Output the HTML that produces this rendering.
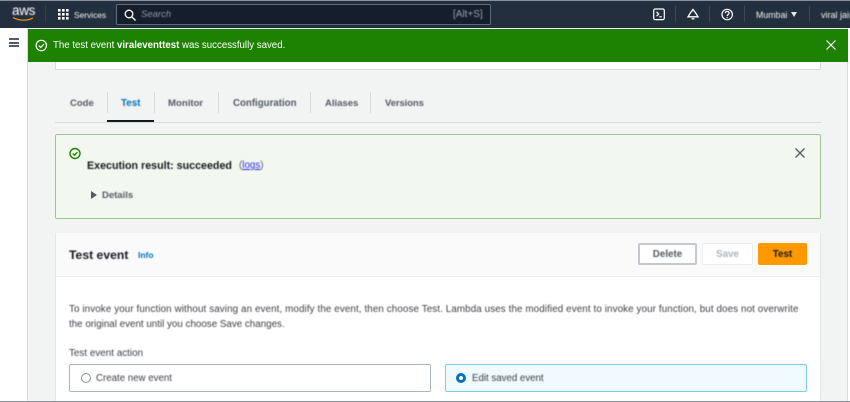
<!DOCTYPE html>
<html><head><meta charset="utf-8"><style>
html,body{margin:0;padding:0}
body{width:850px;height:402px;overflow:hidden;position:relative;background:#f2f3f3;font-family:"Liberation Sans",sans-serif;color:#16191f}
.a{position:absolute}
.t{position:absolute;white-space:nowrap;line-height:14px;filter:blur(.4px);margin-top:1px}
.h{margin-top:0}
svg{position:absolute;overflow:visible;filter:blur(.3px)}
</style></head><body>
<!-- header -->
<div class="a" style="left:0;top:0;width:850px;height:28px;background:#232f3e;border-top:1px solid #8a9099;box-sizing:border-box"></div>
<div class="t h" style="left:12px;top:4px;font-size:13.5px;color:#fff;letter-spacing:-.3px">aws</div>
<svg style="left:12px;top:16px" width="24" height="6"><path d="M1 1.500C7 5 15 5 21 2" fill="none" stroke="#f90" stroke-width="1.200"/></svg>
<div class="a" style="left:45px;top:5px;width:1px;height:17px;background:#333f4d"></div>
<svg style="left:58px;top:9px" width="11" height="11" fill="#fff"><rect x="0" y="0" width="2.600" height="2.600"/><rect x="4" y="0" width="2.600" height="2.600"/><rect x="8" y="0" width="2.600" height="2.600"/><rect x="0" y="4" width="2.600" height="2.600"/><rect x="4" y="4" width="2.600" height="2.600"/><rect x="8" y="4" width="2.600" height="2.600"/><rect x="0" y="8" width="2.600" height="2.600"/><rect x="4" y="8" width="2.600" height="2.600"/><rect x="8" y="8" width="2.600" height="2.600"/></svg>
<div class="t h" style="left:74px;top:8px;font-size:8.400px;color:#f2f3f3">Services</div>
<div class="a" style="left:116px;top:4px;width:375px;height:21px;background:#161e2d;border:1px solid #5f6b7a;border-radius:2px;box-sizing:border-box"></div>
<svg style="left:124px;top:9px" width="12" height="12" fill="none" stroke="#fff" stroke-width="1.300"><circle cx="5" cy="5" r="3.800"/><path d="M8 8l3.500 3.500"/></svg>
<div class="t h" style="left:141px;top:8px;font-size:9.500px;font-style:italic;color:#8d99a8">Search</div>
<div class="t h" style="left:453px;top:8px;font-size:10px;color:#95a1ae">[Alt+S]</div>
<svg style="left:653px;top:8px" width="12" height="13" fill="none" stroke="#fff" stroke-width="1.200"><rect x=".7" y="1" width="10.600" height="10.600" rx="1.500"/><path d="M3.500 3.800l2.200 2.200-2.200 2.200M6.200 8.800h2.600"/></svg>
<div class="a" style="left:675px;top:6px;width:1px;height:16px;background:#3b4858"></div>
<svg style="left:687px;top:8px" width="12" height="13" fill="none" stroke="#fff" stroke-width="1.300"><path d="M6 1.500L9 5.500 11 8.800H1L3 5.500z"/><path d="M4.600 10.800h2.800"/></svg>
<div class="a" style="left:709px;top:6px;width:1px;height:16px;background:#3b4858"></div>
<svg style="left:721px;top:8px" width="13" height="13" fill="none" stroke="#fff" stroke-width="1.200"><circle cx="6.200" cy="6.500" r="5.200"/><path d="M4.400 5.200c0-2.300 3.700-2.300 3.700-.1 0 1.300-1.900 1.500-1.900 3"/><path d="M6.200 9.100v1"/></svg>
<div class="a" style="left:744px;top:6px;width:1px;height:16px;background:#3b4858"></div>
<div class="t h" style="left:756px;top:8px;font-size:8.800px;color:#f2f3f3">Mumbai</div>
<div class="a" style="left:791px;top:12px;width:0;height:0;border-left:3.500px solid transparent;border-right:3.500px solid transparent;border-top:5px solid #e6e8ea"></div>
<div class="a" style="left:809px;top:6px;width:1px;height:16px;background:#3b4858"></div>
<div class="t h" style="left:821px;top:8px;font-size:9px;color:#f2f3f3;width:29px;overflow:hidden">viral jain</div>
<!-- sidebar -->
<div class="a" style="left:0;top:28px;width:28px;height:374px;background:#fff;border-right:1px solid #d5dbdb;box-sizing:border-box"></div>
<div class="a" style="left:9px;top:38px;width:10px;height:2px;background:#545b64"></div>
<div class="a" style="left:9px;top:42px;width:10px;height:2px;background:#545b64"></div>
<div class="a" style="left:9px;top:45px;width:10px;height:2px;background:#545b64"></div>
<!-- right edge -->
<div class="a" style="left:847px;top:28px;width:3px;height:374px;background:#fff;border-left:1px solid #d5dbdb;box-sizing:border-box"></div>
<!-- top panel remainder -->
<div class="a" style="left:55px;top:60px;width:766px;height:10px;background:#fff;border:1px solid #d5dbdb;border-top:0;box-sizing:border-box"></div>
<!-- flash -->
<div class="a" style="left:28px;top:29px;width:820px;height:33px;background:#1d8102"></div>
<svg style="left:35px;top:39px" width="13" height="13" fill="none" stroke="#fff" stroke-width="1.200"><circle cx="6.300" cy="6.500" r="5.200"/><path d="M3.800 6.600l1.900 1.900 3.200-3.400"/></svg>
<div class="t" style="left:53px;top:38px;font-size:9.680px;color:#fff;filter:blur(.25px)">The test event <b>viraleventtest</b> was successfully saved.</div>
<svg style="left:826px;top:40px" width="10" height="10" fill="none" stroke="#fff" stroke-width="1.200"><path d="M.5.500l9 9M9.500.500l-9 9"/></svg>
<!-- tabs -->
<div class="t" style="left:70px;top:96px;font-size:9.500px;font-weight:700;color:#545b64">Code</div>
<div class="a" style="left:107px;top:92px;width:1px;height:21px;background:#d5dbdb"></div>
<div class="t" style="left:121px;top:96px;font-size:9.800px;font-weight:700;color:#0073bb">Test</div>
<div class="a" style="left:154px;top:92px;width:1px;height:21px;background:#d5dbdb"></div>
<div class="t" style="left:168px;top:96px;font-size:9.600px;font-weight:700;color:#545b64">Monitor</div>
<div class="a" style="left:218px;top:92px;width:1px;height:21px;background:#d5dbdb"></div>
<div class="t" style="left:233px;top:96px;font-size:9.700px;font-weight:700;color:#545b64">Configuration</div>
<div class="a" style="left:310px;top:92px;width:1px;height:21px;background:#d5dbdb"></div>
<div class="t" style="left:325px;top:96px;font-size:9.500px;font-weight:700;color:#545b64">Aliases</div>
<div class="a" style="left:370px;top:92px;width:1px;height:21px;background:#d5dbdb"></div>
<div class="t" style="left:385px;top:96px;font-size:9.500px;letter-spacing:-.1px;font-weight:700;color:#545b64">Versions</div>
<div class="a" style="left:55px;top:122px;width:766px;height:1px;background:#d5dbdb"></div>
<div class="a" style="left:107px;top:120px;width:47px;height:2px;background:#16191f"></div>
<!-- result -->
<div class="a" style="left:55px;top:134px;width:766px;height:85px;background:#f2f8f0;border:1px solid #9bc690;border-radius:2px;box-sizing:border-box"></div>
<svg style="left:69px;top:147px" width="13" height="13" fill="none" stroke="#1d8102" stroke-width="1.400"><circle cx="6" cy="6.500" r="5"/><path d="M3.800 6.500l1.700 1.700 2.900-3"/></svg>
<div class="t" style="left:87px;top:158px;font-size:10.700px;font-weight:700;color:#16191f">Execution result: succeeded</div>
<div class="t" style="left:239px;top:158px;font-size:9.800px;color:#545b64">(<span style="color:#2a2ae0;text-decoration:underline">logs</span>)</div>
<div class="a" style="left:91px;top:191px;width:0;height:0;border-top:4px solid transparent;border-bottom:4px solid transparent;border-left:6px solid #545b64"></div>
<div class="t" style="left:102px;top:188px;font-size:9.500px;font-weight:700;color:#545b64">Details</div>
<svg style="left:795px;top:148px" width="10" height="10" fill="none" stroke="#545b64" stroke-width="1.300"><path d="M.5.500l9 9M9.500.500l-9 9"/></svg>
<!-- test event card -->
<div class="a" style="left:55px;top:233px;width:766px;height:169px;background:#fff;border-left:1px solid #e3e5e5;border-right:1px solid #e3e5e5;box-sizing:border-box"></div>
<div class="a" style="left:56px;top:233px;width:764px;height:44px;background:#fafafa;border-bottom:1px solid #eaeded;box-sizing:border-box"></div>
<div class="t" style="left:69px;top:247px;font-size:12.200px;font-weight:700;color:#16191f">Test event</div>
<div class="t h" style="left:138px;top:248px;font-size:8.500px;font-weight:700;color:#0073bb">Info</div>
<div class="a" style="left:638px;top:243px;width:59px;height:22px;background:#fff;border:2px solid #c3c9cc;border-radius:2px;box-sizing:border-box"></div>
<div class="t" style="left:638px;top:247px;width:59px;text-align:center;font-size:9.800px;font-weight:700;color:#545b64">Delete</div>
<div class="a" style="left:702px;top:243px;width:51px;height:22px;background:#fff;border:1px solid #eaeded;border-radius:2px;box-sizing:border-box"></div>
<div class="t" style="left:702px;top:247px;width:51px;text-align:center;font-size:9.800px;font-weight:700;color:#aab7b8">Save</div>
<div class="a" style="left:758px;top:243px;width:49px;height:22px;background:#f90;border-radius:2px"></div>
<div class="t" style="left:758px;top:247px;width:49px;text-align:center;font-size:9.800px;font-weight:700;color:#16191f">Test</div>
<div class="t" style="left:69px;top:302px;font-size:9.800px;letter-spacing:.11px;color:#3a3f47">To invoke your function without saving an event, modify the event, then choose Test. Lambda uses the modified event to invoke your function, but does not overwrite</div>
<div class="t" style="left:69px;top:317px;font-size:9.800px;color:#3a3f47">the original event until you choose Save changes.</div>
<div class="t" style="left:69px;top:346px;font-size:9.900px;color:#3a3f47">Test event action</div>
<div class="a" style="left:69px;top:364px;width:362px;height:28px;background:#fff;border:1px solid #aab7b8;border-radius:2px;box-sizing:border-box"></div>
<div class="a" style="left:81px;top:373px;width:10px;height:10px;border:1px solid #879596;border-radius:50%;box-sizing:border-box;background:#fff"></div>
<div class="t" style="left:96px;top:371px;font-size:9.700px;color:#3a3f47">Create new event</div>
<div class="a" style="left:445px;top:364px;width:362px;height:28px;background:#f1faff;border:1px solid #7fcde6;border-radius:2px;box-sizing:border-box"></div>
<div class="a" style="left:456px;top:373px;width:10px;height:10px;border:3px solid #0073bb;border-radius:50%;box-sizing:border-box;background:#fff"></div>
<div class="t" style="left:472px;top:371px;font-size:9.700px;color:#3a3f47">Edit saved event</div>
<div class="a" style="left:0;top:401px;width:850px;height:1px;background:#8f9395"></div>
</body></html>
